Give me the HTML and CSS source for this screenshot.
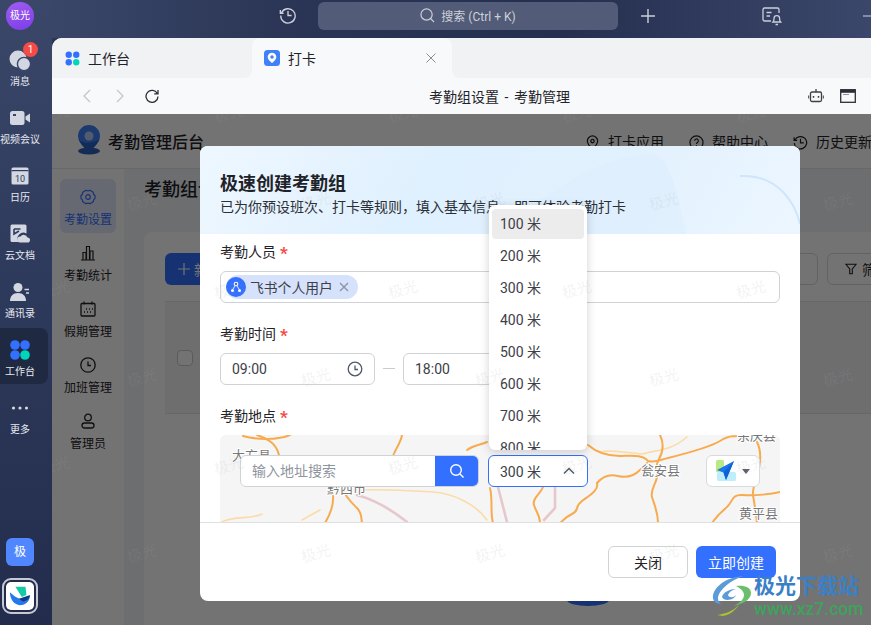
FILE: index.html
```html
<!DOCTYPE html>
<html lang="zh-CN">
<head>
<meta charset="utf-8">
<title>考勤组设置 - 考勤管理</title>
<link rel="stylesheet" href="styles.css">
</head>
<body>
<div class="app">
  <aside class="rail">
    <div class="avatar">极光</div>
    <div class="rail-item">
      <svg class="rail-icon" viewBox="0 0 22 22"><circle cx="9" cy="10" r="8.5" fill="#d3d7e1"/><circle cx="15" cy="15" r="6.6" fill="#d3d7e1" stroke="#39456a" stroke-width="1.4"/></svg>
      <span class="rail-label">消息</span><span class="badge">1</span>
    </div>
    <div class="rail-item">
      <svg class="rail-icon" viewBox="0 0 22 22"><rect x="1" y="4" width="14.5" height="14" rx="2.5" fill="#d3d7e1"/><path d="M16.5 9.5 21 6.5v9l-4.500-3z" fill="#d3d7e1"/><rect x="4" y="7" width="3" height="2" fill="#39456a"/></svg>
      <span class="rail-label">视频会议</span>
    </div>
    <div class="rail-item">
      <svg class="rail-icon" viewBox="0 0 22 22"><rect x="2.500" y="2.500" width="17" height="17" rx="1.500" fill="#d3d7e1"/><rect x="2.500" y="5" width="17" height="1.200" fill="#2f3a5c"/><text class="cal-num" x="11" y="16.500">10</text></svg>
      <span class="rail-label">日历</span>
    </div>
    <div class="rail-item">
      <svg class="rail-icon" viewBox="0 0 22 22"><path d="M3 1.500h13a1.500 1.500 0 0 1 1.500 1.500v7.500a6 6 0 0 0-8 8.500H3A1.500 1.500 0 0 1 1.500 17.500V3A1.500 1.500 0 0 1 3 1.500z" fill="#d3d7e1"/><path d="M5 6h6.500M5 6v5l5-3" fill="none" stroke="#323e60" stroke-width="1.600"/><path d="M11 19.500a3 3 0 0 1 .5-6 4 4 0 0 1 7 1 2.600 2.600 0 0 1 1 5z" fill="#d3d7e1"/></svg>
      <span class="rail-label">云文档</span>
    </div>
    <div class="rail-item">
      <svg class="rail-icon" viewBox="0 0 22 22"><circle cx="9" cy="6.500" r="4.500" fill="#d3d7e1"/><path d="M1 20c0-5 3-8 8-8s8 3 8 8z" fill="#d3d7e1"/><path d="M15.500 8.500h4.500M17 12h3" stroke="#d3d7e1" stroke-width="1.400"/></svg>
      <span class="rail-label">通讯录</span>
    </div>
    <div class="rail-item rail-item-active">
      <svg class="rail-icon" viewBox="0 0 22 22"><circle cx="6" cy="6" r="4.800" fill="#3370ff"/><circle cx="16" cy="6" r="4.800" fill="#3370ff"/><circle cx="6" cy="16" r="4.800" fill="#3370ff"/><circle cx="16" cy="16" r="4.800" fill="#00d6b9"/></svg>
      <span class="rail-label">工作台</span>
    </div>
    <div class="rail-item">
      <svg class="rail-icon" viewBox="0 0 22 22"><circle cx="4.500" cy="11" r="1.600" fill="#d3d7e1"/><circle cx="11" cy="11" r="1.600" fill="#d3d7e1"/><circle cx="17.500" cy="11" r="1.600" fill="#d3d7e1"/></svg>
      <span class="rail-label">更多</span>
    </div>
    <div class="org-square">极</div>
    <div class="app-tile">
      <div class="app-tile-inner">
        <svg class="app-logo" viewBox="0 0 24 24"><path d="M7 2h11l1 9-5 2z" fill="#12c9a8"/><path d="M1 8c3 3 7 6 11 7l11-3c-1 7-6 10-11 10C6 22 1 16 1 8z" fill="#2478ee"/><path d="M11 15l12-4c-1 5-5 7-8 7z" fill="#12397f"/></svg>
      </div>
    </div>
  </aside>

  <div class="shell">
    <header class="topbar">
      <svg class="top-icon" viewBox="0 0 20 20"><path d="M2.800 7.500A8 8 0 1 1 2 10.500M1.500 4.500v3.500H5M10 5.500V10.500H14" fill="none" stroke="#ccd0da" stroke-width="1.500"/></svg>
      <div class="search-box">
        <svg class="search-glyph" viewBox="0 0 16 16"><circle cx="7" cy="7" r="6" fill="none" stroke="#ccd0da" stroke-width="1.300"/><path d="M11.500 11.500 15 15" stroke="#ccd0da" stroke-width="1.300"/></svg>
        <span>搜索 (Ctrl + K)</span>
      </div>
      <svg class="plus-icon" viewBox="0 0 14 14"><path d="M7 0v14M0 7h14" stroke="#ccd0da" stroke-width="1.400"/></svg>
      <svg class="ticket-icon" viewBox="0 0 20 20"><path d="M9 15H2.500A1.500 1.500 0 0 1 1 13.500v-10A1.500 1.500 0 0 1 2.500 2h13A1.500 1.500 0 0 1 17 3.500V7M4.500 6.500h5M4.500 10H8" fill="none" stroke="#ccd0da" stroke-width="1.300"/><path d="M11 16c1-1 1-2 1-3.500a2.800 2.800 0 0 1 5.600 0c0 1.500 0 2.500 1 3.500zM13.500 18.500h2.500" fill="none" stroke="#ccd0da" stroke-width="1.300"/></svg>
      <svg class="min-icon" viewBox="0 0 10 2"><path d="M0 1h10" stroke="#ccd0da" stroke-width="1"/></svg>
    </header>

    <div class="tabs">
      <div class="tab tab-idle">
        <svg class="tab-icon" viewBox="0 0 16 16"><circle cx="4" cy="4" r="3.400" fill="#3370ff"/><circle cx="12" cy="4" r="3.400" fill="#3370ff"/><circle cx="4" cy="12" r="3.400" fill="#3370ff"/><circle cx="12" cy="12" r="3.400" fill="#00d6b9"/></svg>
        <span>工作台</span>
      </div>
      <div class="tab tab-active">
        <svg class="tab-icon" viewBox="0 0 16 16"><rect width="16" height="16" rx="3.500" fill="#3f82f7"/><path d="M8 2.800a4.300 4.300 0 0 0-4.300 4.300C3.700 10 8 13 8 13s4.300-3 4.300-5.900A4.300 4.300 0 0 0 8 2.800z" fill="#fff"/><circle cx="8" cy="7" r="1.700" fill="#3f82f7"/></svg>
        <span>打卡</span>
        <svg class="tab-close" viewBox="0 0 10 10"><path d="M.5.500l9 9M9.500.500l-9 9" stroke="#8a8d93" stroke-width="1"/></svg>
      </div>
      <div class="tab-fill"></div>
    </div>

    <div class="toolbar">
      <svg class="nav-icon" viewBox="0 0 10 14"><path d="M8 1 2 7l6 6" fill="none" stroke="#c4c6cb" stroke-width="1.300"/></svg>
      <svg class="nav-icon nav-forward" viewBox="0 0 10 14"><path d="M2 1l6 6-6 6" fill="none" stroke="#c4c6cb" stroke-width="1.300"/></svg>
      <svg class="reload-icon" viewBox="0 0 14 14"><path d="M12.300 4.500A6 6 0 1 0 13 7.500M13 1v3.800H9.200" fill="none" stroke="#2b2f36" stroke-width="1.300"/></svg>
      <div class="page-title">考勤组设置 - 考勤管理</div>
      <svg class="tool-icon" viewBox="0 0 16 16"><rect x="2.500" y="4" width="11" height="9.500" rx="1.500" fill="none" stroke="#3c4048" stroke-width="1.300"/><path d="M8 1v3" stroke="#3c4048" stroke-width="1.300"/><path d="M5.500 8v1.800M10.500 8v1.800" stroke="#3c4048" stroke-width="1.500"/><path d="M.7 7.500v3M15.300 7.500v3" stroke="#3c4048" stroke-width="1"/></svg>
      <svg class="tool-icon tool-window" viewBox="0 0 16 14"><rect x=".7" y=".7" width="14.600" height="12.600" fill="none" stroke="#2b2f36" stroke-width="1.300"/><rect x="1" y="1" width="14" height="2.800" fill="#2b2f36"/><path d="M3 5.500h6" stroke="#8e9198" stroke-width="1"/></svg>
    </div>

    <div class="content">
      <div class="admin-head">
        <svg class="admin-logo" viewBox="0 0 24 30"><ellipse cx="12" cy="26" rx="11" ry="3.500" fill="#2e60b8"/><path d="M12 0a11 11 0 0 0-11 11c0 7 8 13 11 16 3-3 11-9 11-16A11 11 0 0 0 12 0z" fill="#3f82f7"/><path d="M12 27C9 24 3 19 1.500 14c3 5 14 5 21 0-1.500 5-7.500 10-10.500 13z" fill="#2a5fc6"/><circle cx="12" cy="11" r="4.500" fill="#b8cdf5"/></svg>
        <span class="admin-title">考勤管理后台</span>
        <div class="admin-links">
          <span class="admin-link"><svg class="link-icon" viewBox="0 0 16 16"><path d="M8 1a5.500 5.500 0 0 0-5.500 5.500C2.500 10 8 15 8 15s5.500-5 5.500-8.500A5.500 5.500 0 0 0 8 1z" fill="none" stroke="#222" stroke-width="1.300"/><circle cx="8" cy="6.500" r="1.800" fill="none" stroke="#222" stroke-width="1.300"/></svg>打卡应用</span>
          <span class="admin-link"><svg class="link-icon" viewBox="0 0 16 16"><circle cx="8" cy="8" r="7" fill="none" stroke="#222" stroke-width="1.300"/><path d="M6 6.200a2 2 0 1 1 3 1.700c-.7.400-1 .8-1 1.600M8 11v1.200" fill="none" stroke="#222" stroke-width="1.200"/></svg>帮助中心</span>
          <span class="admin-link"><svg class="link-icon" viewBox="0 0 16 16"><path d="M2 5.500A6.600 6.600 0 1 1 1.400 8.500M1.200 2.500v3.200h3.200M8 4v4.300h3.500" fill="none" stroke="#222" stroke-width="1.300"/></svg>历史更新</span>
        </div>
      </div>
      <div class="admin-body">
        <nav class="side-nav">
          <div class="side-item side-item-active">
            <svg class="side-icon" viewBox="0 0 16 16"><path d="M6 1.300Q8 2.600 10 1.300L13.200 3.200Q13.200 5.500 15 6.500V9.500Q13.200 10.500 13.200 12.800L10 14.700Q8 13.400 6 14.700L2.800 12.800Q2.800 10.500 1 9.500V6.500Q2.800 5.500 2.800 3.200Z" fill="none" stroke="#3370ff" stroke-width="1.200" stroke-linejoin="round"/><circle cx="8" cy="8" r="2.300" fill="none" stroke="#3370ff" stroke-width="1.200"/></svg>
            <span>考勤设置</span>
          </div>
          <div class="side-item">
            <svg class="side-icon" viewBox="0 0 16 16"><path d="M1 15h14M3 15V7.500h3V15M6.500 15V1.500h3V15M10 15V6h3v9" fill="none" stroke="#222" stroke-width="1.200"/></svg>
            <span>考勤统计</span>
          </div>
          <div class="side-item">
            <svg class="side-icon" viewBox="0 0 16 16"><rect x="1" y="2.500" width="14" height="12.500" rx="1" fill="none" stroke="#222" stroke-width="1.300"/><path d="M4 .5v3M12 .5v3" stroke="#222" stroke-width="1.200"/><path d="M6 8h1M9 8h1M12 8h1M4 11h1M7 11h1M10 11h1" stroke="#222" stroke-width="1.400"/></svg>
            <span>假期管理</span>
          </div>
          <div class="side-item">
            <svg class="side-icon" viewBox="0 0 16 16"><circle cx="8" cy="8" r="7.200" fill="none" stroke="#222" stroke-width="1.300"/><path d="M8 4.500V8.500h3" fill="none" stroke="#222" stroke-width="1.300"/></svg>
            <span>加班管理</span>
          </div>
          <div class="side-item">
            <svg class="side-icon" viewBox="0 0 16 16"><circle cx="8" cy="4.500" r="3.300" fill="none" stroke="#222" stroke-width="1.300"/><rect x="2" y="10" width="12" height="5" rx="2.500" fill="none" stroke="#222" stroke-width="1.300"/></svg>
            <span>管理员</span>
          </div>
        </nav>
        <main class="admin-main">
          <h1 class="admin-h1">考勤组设置</h1>
          <section class="card">
            <div class="card-tools">
              <button class="btn-new"><svg class="new-plus" viewBox="0 0 12 12"><path d="M6 0v12M0 6h12" stroke="#fff" stroke-width="1.200"/></svg>新建</button>
              <div class="card-tools-right">
                <span class="ghost-btn"></span>
                <span class="ghost-btn ghost-filter"><svg class="filter-icon" viewBox="0 0 14 14"><path d="M1 1.500h12L8.500 7v5.500h-3V7z" fill="none" stroke="#222" stroke-width="1.300"/></svg>筛选</span>
              </div>
            </div>
            <div class="table-row"><span class="checkbox"></span></div>
            <div class="blob"></div>
          </section>
        </main>
      </div>

      <div class="mask"></div>

      <div class="modal">
        <div class="modal-head">
          <svg class="modal-art" viewBox="0 0 600 88" preserveAspectRatio="none"><path d="M300 88C340 50 400 10 450 8c20 0 28 40 36 80z" fill="#dcedfc" opacity=".55"/><path d="M540 30c40-2 56 30 60 48" fill="none" stroke="#cfe5fb" stroke-width="2"/></svg>
          <h2 class="modal-title">极速创建考勤组</h2>
          <p class="modal-sub">已为你预设班次、打卡等规则，填入基本信息，即可体验考勤打卡</p>
        </div>
        <div class="modal-body">
          <label class="field-label">考勤人员<em class="req">*</em></label>
          <div class="input-box member-box">
            <span class="member-tag">
              <span class="member-avatar"><svg viewBox="0 0 12 12"><circle cx="6" cy="3" r="1.800" fill="none" stroke="#fff" stroke-width="1.100"/><circle cx="2.500" cy="9.500" r="1.500" fill="#fff"/><circle cx="9.500" cy="9.500" r="1.500" fill="#fff"/><path d="M5 5 3 8M7 5l2 3" stroke="#fff" stroke-width=".9"/></svg></span>
              <span>飞书个人用户</span>
              <svg class="tag-x" viewBox="0 0 10 10"><path d="M1 1l8 8M9 1 1 9" stroke="#8d93a3" stroke-width="1.400"/></svg>
            </span>
          </div>
          <label class="field-label">考勤时间<em class="req">*</em></label>
          <div class="time-row">
            <div class="input-box time-box"><span>09:00</span><svg class="clock" viewBox="0 0 16 16"><circle cx="8" cy="8" r="6.800" fill="none" stroke="#4e5969" stroke-width="1.300"/><path d="M8 4.500V8.500h3" fill="none" stroke="#4e5969" stroke-width="1.300"/></svg></div>
            <span class="time-dash"></span>
            <div class="input-box time-box"><span>18:00</span></div>
          </div>
          <label class="field-label">考勤地点<em class="req">*</em></label>
          <div class="map">
            <svg class="map-svg" viewBox="220 435 560 88">
              <g class="road-pale">
                <path d="M363 490C390 489 415 491 433 492S475 503 487 520"/>
                <path d="M302 520 320 510"/>
                <path d="M600 452C610 449 625 453 643 454 652 450 670 452 687 437"/>
                <path d="M222 522C235 515 250 520 262 514"/>
              </g>
              <g class="road-pink">
                <path d="M357 495C375 500 392 510 407 522"/>
                <path d="M555 487V508L544 520"/>
                <path d="M498 487 507 522"/>
              </g>
              <g class="road">
                <path d="M257 435C268 439 276 443 279 455"/>
                <path d="M243 436C258 440 278 440 290 435"/>
                <path d="M402 435C401 442 396 448 393 456"/>
                <path d="M342 487C345 497 352 503 357 508S361 517 362 523"/>
                <path d="M333 495C334 505 331 513 325 523"/>
                <path d="M467 450C474 445 480 445 487 442"/>
                <path d="M588 445C596 452 608 456 620 456S642 454 648 461C654 463 660 460 668 458S710 447 720 441 730 437 737 436"/>
                <path d="M660 435C664 443 664 450 659 459S658 470 657 477 650 490 652 497 658 512 658 523"/>
                <path d="M597 483C603 476 610 474 618 476S634 476 640 470 645 465 647 463"/>
                <path d="M597 483C599 490 590 495 582 501S580 510 572 514 564 520 560 523"/>
                <path d="M757 442C761 450 761 458 759 468S752 488 753 495 756 512 757 523"/>
                <path d="M780 492C772 494 755 496 743 495S733 502 727 507 716 517 712 523"/>
                <path d="M543 487C540 495 532 498 534 505S540 515 540 523"/>
                <path d="M490 488C493 500 490 512 493 523"/>
              </g>
              <text class="map-text" x="232" y="460">大方县</text>
              <text class="map-text" x="327" y="493">黔西市</text>
              <text class="map-text" x="641" y="475">瓮安县</text>
              <text class="map-text" x="737" y="440">余庆县</text>
              <text class="map-text" x="739" y="518">黄平县</text>
            </svg>
            <div class="map-controls">
              <div class="addr-search">
                <span class="addr-input">输入地址搜索</span>
                <span class="addr-btn"><svg viewBox="0 0 16 16"><circle cx="7" cy="7" r="5.300" fill="none" stroke="#fff" stroke-width="1.400"/><path d="M11 11l3.500 3.500" stroke="#fff" stroke-width="1.400"/></svg></span>
              </div>
              <div class="radius-select"><span>300 米</span><svg class="chev" viewBox="0 0 12 8"><path d="M1 6.500 6 1.500l5 5" fill="none" stroke="#4e5969" stroke-width="1.500"/></svg></div>
              <div class="map-type">
                <svg class="map-type-icon" viewBox="0 0 20 22"><rect x="0" y="0" width="8" height="12" rx="1.500" fill="#b8e986"/><rect x="1" y="12" width="19" height="9" rx="1.500" fill="#bfeefb"/><path d="M18 1 1 10l6.500 2.500L10 20z" fill="#1677ee"/><path d="M18 1 7.500 12.500 10 20z" fill="#0f62d6"/></svg>
                <svg class="caret" viewBox="0 0 8 5"><path d="M0 0h8L4 5z" fill="#5a5f69"/></svg>
              </div>
            </div>
          </div>
        </div>
        <div class="modal-foot">
          <button class="btn btn-plain">关闭</button>
          <button class="btn btn-primary">立即创建</button>
        </div>
        <ul class="dropdown">
          <li class="option option-hover">100 米</li>
          <li class="option">200 米</li>
          <li class="option">300 米</li>
          <li class="option">400 米</li>
          <li class="option">500 米</li>
          <li class="option">600 米</li>
          <li class="option">700 米</li>
          <li class="option">800 米</li>
        </ul>
      </div>

      <div class="watermarks">
        <div class="wm-row wm-a"><span>极光</span><span>极光</span><span>极光</span><span>极光</span><span>极光</span></div>
        <div class="wm-row wm-b"><span>极光</span><span>极光</span><span>极光</span><span>极光</span><span>极光</span></div>
        <div class="wm-row wm-a"><span>极光</span><span>极光</span><span>极光</span><span>极光</span><span>极光</span></div>
        <div class="wm-row wm-b"><span>极光</span><span>极光</span><span>极光</span><span>极光</span><span>极光</span></div>
        <div class="wm-row wm-a"><span>极光</span><span>极光</span><span>极光</span><span>极光</span><span>极光</span></div>
        <div class="wm-row wm-b"><span>极光</span><span>极光</span><span>极光</span><span>极光</span><span>极光</span></div>
      </div>
    </div>
  </div>

  <div class="brand">
    <svg class="brand-logo" viewBox="0 0 44 42"><path d="M31 2C17 3 4 10 1 21c-1 6 3 9 8 9C5 27 5 22 9 17 14 10 23 5 31 2z" fill="#5b9bd8"/><path d="M10 23c1-5 8-8 14-8-4 1-7 3-8 6 1 3 6 3 8 0-1 5-12 7-14 2z" fill="#5b9bd8"/><path d="M24 12c8-1 15 1 15 7 0 7-9 11-17 13 6-3 10-7 10-11 0-4-4-7-8-9z" fill="#69bf6b"/><path d="M5 41c8-1 16-4 22-10-4 6-10 10-16 11z" fill="#a9c22f"/></svg>
    <div class="brand-text">
      <span class="brand-name">极光下载站</span>
      <span class="brand-url">www.xz7.com</span>
    </div>
  </div>
</div>
</body>
</html>
```

FILE: styles.css
```css
* { box-sizing: border-box; }
html, body { margin: 0; padding: 0; height: 100%; overflow: hidden; }
body { font-family: Roboto, "Noto Sans CJK SC", sans-serif; color: #1f2329; }
svg { display: block; flex: none; }
h1, h2, p, ul { margin: 0; padding: 0; }
ul { list-style: none; }
button { font: inherit; border: 0; padding: 0; }

.app { display: flex; width: 871px; height: 625px; position: relative; overflow: hidden; background: #2a3557; }

/* left rail */
.rail { width: 52px; flex: none; display: flex; flex-direction: column; align-items: flex-start; padding: 2px 0 11px; gap: 2px; background: linear-gradient(180deg, #3b4769 0%, #2e3a5c 45%, #232c4c 100%); }
.avatar { width: 28px; height: 28px; margin: 0 0 6px 6px; border-radius: 50%; background: linear-gradient(160deg, #a35cf0, #7a3de8); color: #fff; font-size: 10px; line-height: 28px; text-align: center; }
.rail-item { position: relative; width: 48px; height: 56px; padding-top: 11px; border-radius: 0 8px 8px 0; display: flex; flex-direction: column; align-items: center; }
.rail-item-active { background: #1f2942; }
.rail-icon { width: 22px; height: 22px; margin-left: -8px; }
.rail-label { width: 40px; margin: 4px 0 0 -8px; font-size: 10px; line-height: 14px; color: #e6e9f0; text-align: center; white-space: nowrap; }
.badge { position: absolute; left: 23px; top: 4px; width: 15px; height: 15px; border-radius: 50%; background: #f54a45; color: #fff; font-size: 10px; line-height: 15px; text-align: center; }
.cal-num { font-size: 9px; text-anchor: middle; fill: #2f3a5c; font-family: Roboto, sans-serif; }
.org-square { width: 28px; height: 28px; margin: auto 0 0 6px; border-radius: 6px; background: #5087ff; color: #fff; font-size: 12px; line-height: 28px; text-align: center; }
.app-tile { width: 36px; height: 36px; margin: 10px 0 0 2px; padding: 2px; border: 2px solid #c6cad6; border-radius: 9px; background: #232c4c; }
.app-tile-inner { width: 100%; height: 100%; border-radius: 5px; background: #fff; display: flex; align-items: center; justify-content: center; }
.app-logo { width: 22px; height: 22px; }

/* shell */
.shell { flex: 1; min-width: 0; display: flex; flex-direction: column; }
.topbar { height: 38px; flex: none; display: flex; align-items: flex-start; padding-left: 227px; overflow: hidden; background: linear-gradient(90deg, #3a4668 0%, #2a3555 30%, #252f50 62%, #3b476a 100%); }
.top-icon { width: 18px; height: 18px; margin-top: 6px; }
.search-box { width: 300px; height: 28px; flex: none; margin: 2px 0 0 21px; padding-bottom: 1px; border-radius: 6px; background: #525b77; display: flex; align-items: center; justify-content: center; gap: 6px; color: #cdd1da; font-size: 12px; }
.search-glyph { width: 15px; height: 15px; }
.plus-icon { width: 14px; height: 14px; margin: 9px 0 0 23px; }
.ticket-icon { width: 20px; height: 20px; margin: 6px 0 0 107px; }
.min-icon { width: 10px; height: 2px; margin: 15px 0 0 81px; }

.tabs { height: 40px; flex: none; display: flex; background: linear-gradient(#f1f2f4 50%, #f8f9fb 50%); border-radius: 10px 0 0 0; }
.tab { width: 200px; flex: none; display: flex; align-items: center; gap: 9px; padding-left: 13px; font-size: 14px; color: #1f2329; }
.tab-idle { gap: 8px; background: #f1f2f4; border-radius: 10px 0 8px 0; }
.tab-active { padding-left: 12px; gap: 8px; background: #f8f9fb; border-radius: 8px 8px 0 0; }
.tab-fill { flex: 1; background: #f1f2f4; border-radius: 0 0 0 8px; }
.tab-icon { width: 15px; height: 15px; }
.tab-active .tab-icon { width: 16px; height: 16px; }
.tab-close { width: 10px; height: 10px; margin-left: auto; margin-right: 16px; }

.toolbar { height: 36px; flex: none; display: flex; align-items: center; padding-left: 30px; background: #f8f9fb; }
.nav-icon { width: 10px; height: 14px; }
.nav-forward { margin-left: 23px; }
.reload-icon { width: 14px; height: 14px; margin-left: 20px; }
.page-title { flex: 1; text-align: center; margin-left: 32px; font-size: 14px; word-spacing: 2px; color: #1f2329; }
.tool-icon { width: 16px; height: 16px; margin-right: 8px; }
.tool-window { height: 14px; margin: 0 15px 0 8px; }

/* dimmed admin page */
.content { flex: 1; min-height: 0; position: relative; background: #fff; overflow: hidden; }
.admin-head { height: 55px; display: flex; align-items: center; padding-left: 25px; border-bottom: 1px solid #e6e7e9; white-space: nowrap; }
.admin-logo { width: 24px; height: 30px; margin-top: -2px; }
.admin-title { margin-left: 7px; font-size: 16px; font-weight: 500; color: #1f2329; }
.admin-links { position: absolute; left: 533px; top: 16px; display: flex; gap: 25px; font-size: 14px; color: #1f2329; }
.admin-link { display: flex; align-items: center; gap: 8px; line-height: 24px; }
.link-icon { width: 15px; height: 15px; }
.admin-body { display: flex; height: calc(100% - 55px); }
.side-nav { width: 72px; flex: none; padding: 10px 8px 0; background: #fff; display: flex; flex-direction: column; }
.side-item { height: 56px; padding-top: 10px; flex: none; display: flex; flex-direction: column; align-items: center; gap: 6px; border-radius: 6px; font-size: 12px; line-height: 18px; color: #1f2329; white-space: nowrap; }
.side-item-active { height: 54px; margin-bottom: 2px; background: #e2e8fb; color: #3370ff; }
.side-icon { width: 16px; height: 16px; }
.admin-main { flex: 1; min-width: 0; padding-left: 20px; background: #f2f3f5; }
.admin-h1 { height: 63px; font-size: 18px; font-weight: 500; line-height: 42px; color: #1f2329; }
.card { position: relative; height: calc(100% - 63px); padding-top: 21px; background: #fff; border-radius: 8px 0 0 0; overflow: hidden; }
.card-tools { height: 48px; padding-left: 21px; display: flex; align-items: flex-start; justify-content: space-between; }
.btn-new { width: 90px; height: 32px; padding-left: 13px; display: flex; align-items: center; gap: 4px; border-radius: 6px; background: #3370ff; color: #fff; font-size: 14px; }
.new-plus { width: 12px; height: 12px; }
.card-tools-right { display: flex; gap: 9px; margin-right: -20px; }
.ghost-btn { width: 70px; height: 32px; border: 1px solid #d9dadc; border-radius: 6px; }
.ghost-filter { width: 64px; padding-left: 17px; display: flex; align-items: center; gap: 5px; font-size: 14px; white-space: nowrap; overflow: hidden; }
.filter-icon { width: 12px; height: 12px; }
.table-row { height: 113px; display: flex; align-items: center; background: #f3f4f5; border-top: 1px solid #e3e4e6; border-bottom: 1px solid #e3e4e6; margin-left: 21px; padding-left: 12px; }
.checkbox { width: 16px; height: 16px; border: 1px solid #c9cbcf; border-radius: 4px; background: #fff; }
.blob { position: absolute; left: 423px; top: 362px; width: 42px; height: 12px; border-radius: 50%; background: #3370ff; }

.mask { position: absolute; inset: 0; background: rgba(0, 0, 0, .55); }

/* modal */
.modal { position: absolute; left: 148px; top: 32px; width: 600px; height: 455px; display: flex; flex-direction: column; border-radius: 8px; background: #fff; }
.modal-head { position: relative; height: 88px; flex: none; padding: 26px 20px 0; border-radius: 8px 8px 0 0; background: linear-gradient(120deg, #eef7ff 0%, #dff0fe 38%, #e2f1fe 68%, #ecf6ff 100%); overflow: hidden; }
.modal-art { position: absolute; inset: 0; width: 100%; height: 100%; }
.modal-title { position: relative; font-size: 18px; line-height: 24px; font-weight: 700; color: #1f2329; }
.modal-sub { position: relative; font-size: 14px; line-height: 22px; color: #2b2f36; white-space: nowrap; }
.modal-body { flex: 1; min-height: 0; padding: 6px 20px 0; overflow: hidden; }
.field-label { display: block; height: 22px; margin-bottom: 9px; font-size: 14px; line-height: 24px; color: #1f2329; }
.req { margin-left: 4px; font-style: normal; font-size: 17px; line-height: 1; font-weight: 700; color: #f54a45; vertical-align: -2px; }
.input-box { height: 32px; border: 1px solid #d0d3d6; border-radius: 6px; background: #fff; margin-bottom: 19px; }
.member-box { padding: 3px 5px; }
.member-tag { display: inline-flex; align-items: center; height: 24px; width: 132px; border-radius: 12px; background: #d6e1fb; font-size: 13.800px; color: #3c4048; gap: 4px; }
.member-avatar { width: 20px; height: 20px; border-radius: 50%; background: #3370ff; padding: 4px; }
.tag-x { width: 10px; height: 10px; margin-left: 2px; }
.time-row { display: flex; align-items: flex-start; }
.time-box { width: 155px; display: flex; align-items: center; justify-content: space-between; padding: 0 11px; font-size: 14px; color: #3c4048; }
.clock { width: 16px; height: 16px; }
.time-dash { width: 12px; height: 1px; margin: 15px 8px 0; background: #c9cbcf; }
.map { position: relative; height: 100px; border-radius: 6px 6px 0 0; background: #f5f5f6; overflow: hidden; }
.map-svg { width: 560px; height: 88px; }
.road path, .road-pale path, .road-pink path { fill: none; stroke-linejoin: round; stroke-linecap: round; }
.road path { stroke: #f8ab4e; stroke-width: 2; }
.road-pale path { stroke: #fbdca8; stroke-width: 1.600; }
.road-pink path { stroke: #e6c8cc; stroke-width: 2.600; }
.map-text { font-size: 13px; fill: #777; paint-order: stroke; stroke: #fff; stroke-width: 2px; }
.map-controls { position: absolute; inset: 20px 0 auto 20px; display: flex; align-items: flex-start; }
.addr-search { width: 239px; height: 32px; display: flex; border: 1px solid #d0d3d6; border-radius: 6px; background: #fff; overflow: hidden; }
.addr-input { flex: 1; padding-left: 11px; font-size: 14px; line-height: 30px; color: #8f959e; }
.addr-btn { width: 44px; margin: -1px -1px -1px 0; background: #3370ff; display: flex; align-items: center; justify-content: center; }
.addr-btn svg { width: 16px; height: 16px; }
.radius-select { width: 100px; height: 32px; margin-left: 9px; padding: 0 11px; display: flex; align-items: center; justify-content: space-between; border: 1px solid #3370ff; border-radius: 6px; background: #fff; font-size: 14px; color: #3c4048; }
.chev { width: 12px; height: 8px; margin-right: 1px; }
.map-type { width: 54px; height: 32px; margin-left: 118px; padding: 0 9px; display: flex; align-items: center; justify-content: space-between; border: 1px solid #d9dadc; border-radius: 6px; background: #fff; }
.map-type-icon { width: 20px; height: 22px; }
.caret { width: 8px; height: 5px; }
.modal-foot { height: 79px; flex: none; display: flex; justify-content: flex-end; gap: 8px; padding: 23px 24px 0; border-top: 1px solid #dfe0e2; }
.btn { width: 80px; height: 32px; border-radius: 6px; font-size: 14px; font-family: inherit; }
.btn-plain { background: #fff; border: 1px solid #d0d3d6; color: #1f2329; }
.btn-primary { background: #3370ff; color: #fff; }
.dropdown { position: absolute; left: 289px; top: 59px; width: 98px; height: 245px; padding: 4px 3px 0; border-radius: 6px; background: #fff; box-shadow: 0 2px 10px rgba(0, 0, 0, .18); overflow: hidden; }
.option { height: 30px; margin-bottom: 2px; padding-left: 8px; border-radius: 4px; font-size: 14px; line-height: 30px; color: #3c4048; }
.option-hover { background: #ececec; }

/* watermark sheet over the page */
.watermarks { position: absolute; inset: 0; overflow: hidden; pointer-events: none; }
.wm-row { display: flex; height: 88px; }
.wm-row:first-child { margin-top: -44px; }
.wm-a { margin-left: -84px; }
.wm-b { margin-left: 3px; }
.wm-row span { width: 174px; flex: none; line-height: 88px; text-align: center; font-size: 15px; color: rgba(165, 165, 165, .14); transform: rotate(-15deg); }

/* corner brand */
.brand { position: absolute; left: 712px; top: 574px; display: flex; pointer-events: none; }
.brand-logo { width: 44px; height: 42px; }
.brand-text { display: flex; flex-direction: column; margin-left: -2px; }
.brand-name { font-size: 21px; line-height: 24px; font-weight: 700; color: #3b80c6; white-space: nowrap; }
.brand-url { font-size: 17.500px; line-height: 22px; font-weight: 500; color: #3da35c; white-space: nowrap; }
```
